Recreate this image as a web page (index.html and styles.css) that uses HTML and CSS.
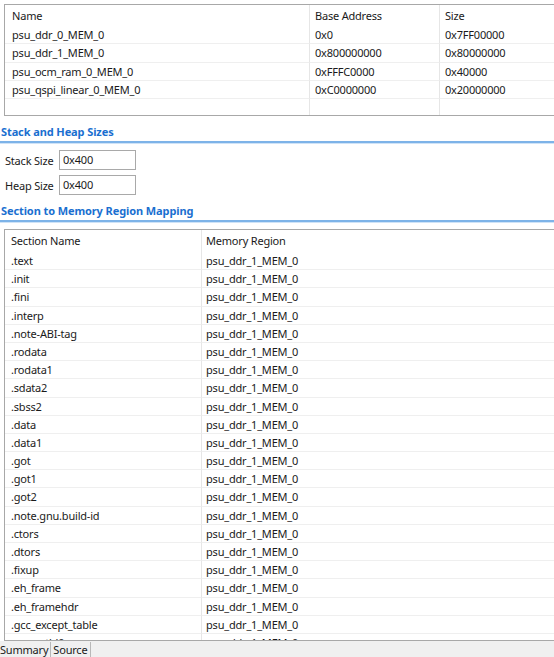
FILE: index.html
```html
<!DOCTYPE html>
<html>
<head>
<meta charset="utf-8">
<link rel="stylesheet" href="styles.css">
</head>
<body>
<div class="page">
  <div class="frame frame-top">
    <div class="grid grid-mem">
      <div class="hcell">Name</div><div class="hcell sep">Base Address</div><div class="hcell sep">Size</div>
      <div class="cell">psu_ddr_0_MEM_0</div><div class="cell sep">0x0</div><div class="cell sep">0x7FF00000</div>
      <div class="cell">psu_ddr_1_MEM_0</div><div class="cell sep">0x800000000</div><div class="cell sep">0x80000000</div>
      <div class="cell">psu_ocm_ram_0_MEM_0</div><div class="cell sep">0xFFFC0000</div><div class="cell sep">0x40000</div>
      <div class="cell">psu_qspi_linear_0_MEM_0</div><div class="cell sep">0xC0000000</div><div class="cell sep">0x20000000</div>
      <div class="fill"></div><div class="fill sep"></div><div class="fill sep"></div>
    </div>
  </div>

  <h2 class="sec sec-stack">Stack and Heap Sizes</h2>
  <div class="fields">
    <div class="field"><span class="lbl">Stack Size</span><span class="input">0x400</span></div>
    <div class="field"><span class="lbl">Heap Size</span><span class="input">0x400</span></div>
  </div>

  <h2 class="sec sec-map">Section to Memory Region Mapping</h2>
  <div class="frame frame-bottom">
    <div class="grid grid-sec">
      <div class="hcell">Section Name</div><div class="hcell sep">Memory Region</div>
      <div class="cell">.text</div><div class="cell sep">psu_ddr_1_MEM_0</div>
      <div class="cell">.init</div><div class="cell sep">psu_ddr_1_MEM_0</div>
      <div class="cell">.fini</div><div class="cell sep">psu_ddr_1_MEM_0</div>
      <div class="cell">.interp</div><div class="cell sep">psu_ddr_1_MEM_0</div>
      <div class="cell">.note-ABI-tag</div><div class="cell sep">psu_ddr_1_MEM_0</div>
      <div class="cell">.rodata</div><div class="cell sep">psu_ddr_1_MEM_0</div>
      <div class="cell">.rodata1</div><div class="cell sep">psu_ddr_1_MEM_0</div>
      <div class="cell">.sdata2</div><div class="cell sep">psu_ddr_1_MEM_0</div>
      <div class="cell">.sbss2</div><div class="cell sep">psu_ddr_1_MEM_0</div>
      <div class="cell">.data</div><div class="cell sep">psu_ddr_1_MEM_0</div>
      <div class="cell">.data1</div><div class="cell sep">psu_ddr_1_MEM_0</div>
      <div class="cell">.got</div><div class="cell sep">psu_ddr_1_MEM_0</div>
      <div class="cell">.got1</div><div class="cell sep">psu_ddr_1_MEM_0</div>
      <div class="cell">.got2</div><div class="cell sep">psu_ddr_1_MEM_0</div>
      <div class="cell">.note.gnu.build-id</div><div class="cell sep">psu_ddr_1_MEM_0</div>
      <div class="cell">.ctors</div><div class="cell sep">psu_ddr_1_MEM_0</div>
      <div class="cell">.dtors</div><div class="cell sep">psu_ddr_1_MEM_0</div>
      <div class="cell">.fixup</div><div class="cell sep">psu_ddr_1_MEM_0</div>
      <div class="cell">.eh_frame</div><div class="cell sep">psu_ddr_1_MEM_0</div>
      <div class="cell">.eh_framehdr</div><div class="cell sep">psu_ddr_1_MEM_0</div>
      <div class="cell">.gcc_except_table</div><div class="cell sep">psu_ddr_1_MEM_0</div>
      <div class="cell">.mmu_tbl0</div><div class="cell sep">psu_ddr_1_MEM_0</div>
    </div>
  </div>

  <div class="tabs">
    <span class="tab tab-active">Summary</span><span class="tab">Source</span>
  </div>
</div>
</body>
</html>
```

FILE: styles.css
```css
* { box-sizing: border-box; }
html, body { margin: 0; padding: 0; background: #ffffff; }
body {
  font-family: "Noto Sans", "Noto Sans CJK SC", sans-serif;
  font-size: 11px;
  letter-spacing: -0.2px;
  color: #1a1a1a;
}
.page {
  width: 554px;
  height: 657px;
  overflow: hidden;
  display: flex;
  flex-direction: column;
}
.frame {
  margin-left: 4px;
  width: 560px;
  border: 1px solid #a8a8a8;
  background: #fff;
  overflow: hidden;
  flex-shrink: 0;
}
.frame-top {
  margin-top: 4px;
  height: 112px;
}
.grid { display: grid; }
.grid-mem { grid-template-columns: 304px 130px 1fr; }
.grid-sec { grid-template-columns: 196px 1fr; }

.hcell {
  height: 21px;
  line-height: 21px;
  padding-left: 7px;
  white-space: nowrap;
}
.grid-sec .hcell { height: 22px; line-height: 22px; padding-left: 6px; }
.cell {
  height: 18.33px;
  line-height: 17px;
  padding-left: 7px;
  border-bottom: 1px solid #efefef;
  white-space: nowrap;
}
.grid-sec .cell { height: 18.2px; padding-left: 6px; }
.sep { border-left: 1px solid #e6e6e6; padding-left: 5px; }
.grid-sec .sep { padding-left: 4px; }
.fill { height: 16px; }

.sec {
  margin: 0;
  font-size: 11px;
  font-weight: bold;
  letter-spacing: -0.1px;
  color: #1a6fd0;
  padding-left: 1px;
  border-bottom: 2px solid #7db3e8;
  box-shadow: 0 1px 0 #cfe3f7;
  white-space: nowrap;
  flex-shrink: 0;
}
.sec-stack {
  height: 27px;
  line-height: 32px;
}
.sec-map {
  height: 25px;
  padding-top: 6px;
  line-height: 15px;
  margin-top: 2px;
}
.fields {
  display: flex;
  flex-direction: column;
  gap: 5px;
  padding: 7px 0 0 5px;
  flex-shrink: 0;
}
.field {
  display: flex;
  align-items: center;
}
.lbl {
  width: 54px;
  white-space: nowrap;
}
.input {
  width: 77px;
  height: 20px;
  line-height: 18px;
  border: 1px solid #a9a9a9;
  padding-left: 3px;
  background: #fff;
}
.frame-bottom {
  margin-top: 7px;
  height: 412px;
}
.tabs {
  flex: 1;
  background: #f0f0f0;
  display: flex;
  align-items: flex-start;
  padding-top: 1px;
}
.tab {
  height: 15px;
  line-height: 15px;
  padding: 0 2px 0 1px;
  font-size: 11px;
  white-space: nowrap;
}
.tab-active { padding-left: 0; }
.tab + .tab {
  border-left: 1px solid #b8b8b8;
  border-right: 1px solid #b8b8b8;
  padding: 0 3px 0 2px;
}
```
